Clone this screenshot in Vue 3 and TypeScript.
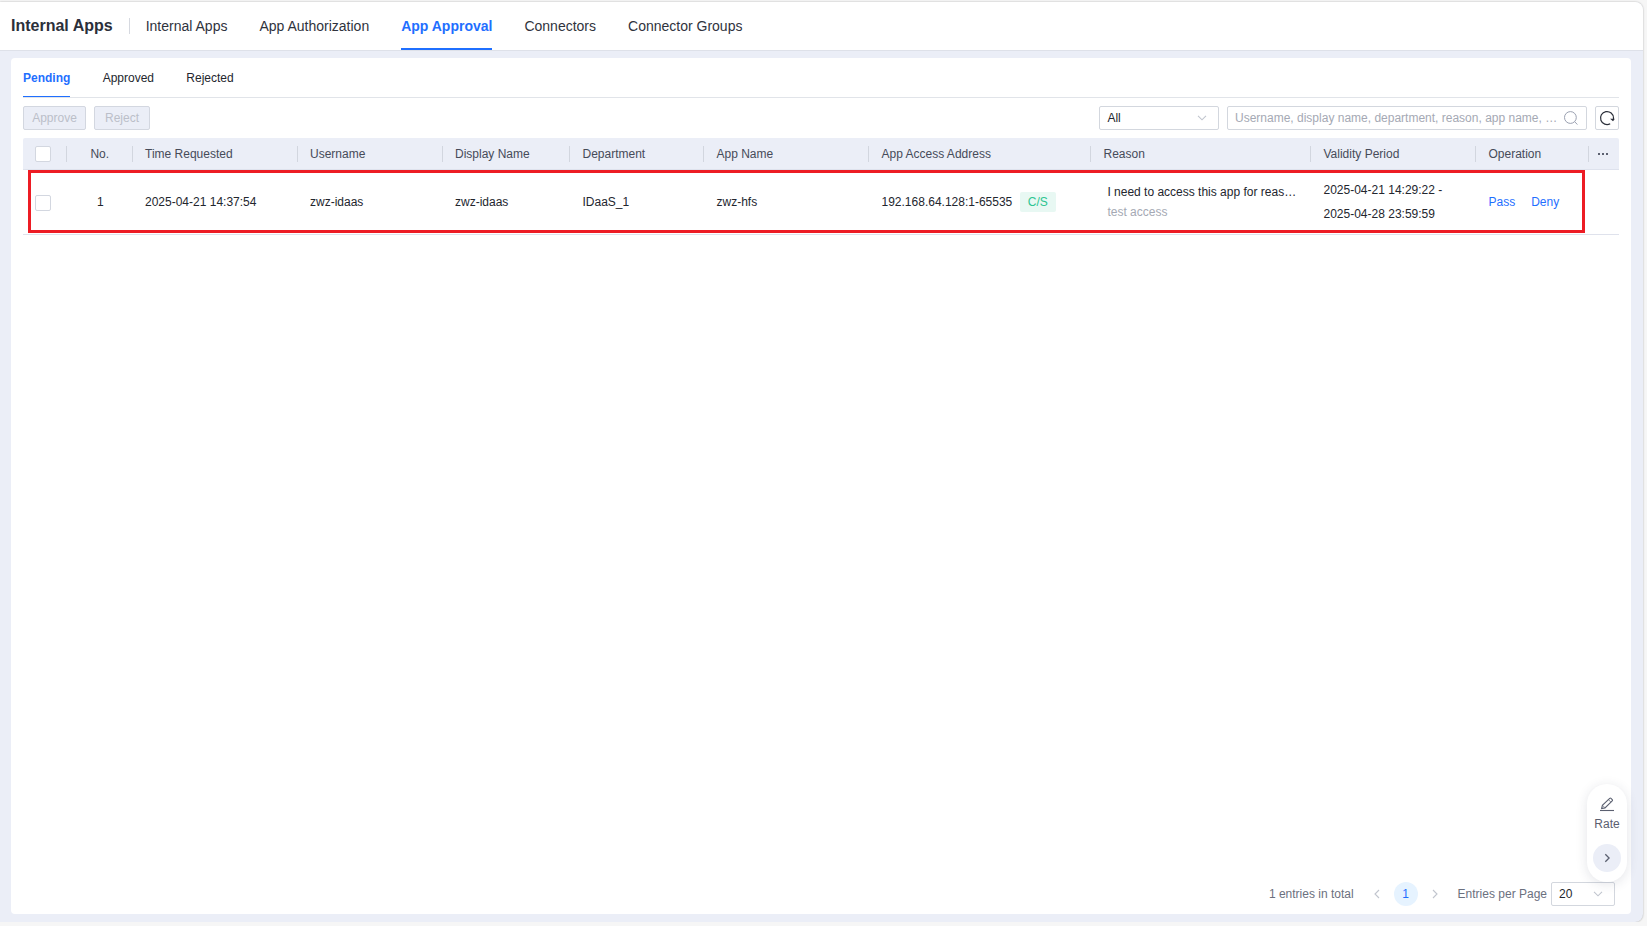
<script setup lang="ts">
import { ref } from 'vue'

interface Column {
  key: string
  label: string
}

const navTabs: string[] = ['Internal Apps', 'App Authorization', 'App Approval', 'Connectors', 'Connector Groups']
const activeNav = ref('App Approval')

const statusTabs: string[] = ['Pending', 'Approved', 'Rejected']
const activeStatus = ref('Pending')

const columns: Column[] = [
  { key: 'no', label: 'No.' },
  { key: 'time', label: 'Time Requested' },
  { key: 'user', label: 'Username' },
  { key: 'display', label: 'Display Name' },
  { key: 'dept', label: 'Department' },
  { key: 'app', label: 'App Name' },
  { key: 'address', label: 'App Access Address' },
  { key: 'reason', label: 'Reason' },
  { key: 'validity', label: 'Validity Period' },
  { key: 'operation', label: 'Operation' },
]

const request = {
  no: 1,
  time: '2025-04-21 14:37:54',
  user: 'zwz-idaas',
  display: 'zwz-idaas',
  dept: 'IDaaS_1',
  app: 'zwz-hfs',
  address: '192.168.64.128:1-65535',
  type: 'C/S',
  reason: 'I need to access this app for reas…',
  note: 'test access',
  from: '2025-04-21 14:29:22 -',
  to: '2025-04-28 23:59:59',
}
</script>

<template>
  <div class="window">
    <header class="topbar">
      <h1 class="title">Internal Apps</h1>
      <span class="divider"></span>
      <nav class="nav">
        <a v-for="tab in navTabs" :key="tab" class="nav-tab" :class="{ active: tab === activeNav }" @click="activeNav = tab">{{ tab }}</a>
      </nav>
    </header>

    <main class="panel">
      <nav class="status-tabs">
        <a v-for="tab in statusTabs" :key="tab" class="status-tab" :class="{ active: tab === activeStatus }" @click="activeStatus = tab">{{ tab }}</a>
      </nav>

      <div class="toolbar">
        <button class="btn approve" disabled>Approve</button>
        <button class="btn reject" disabled>Reject</button>
        <div class="select filter">
          <span>All</span>
          <svg class="chevron" width="10" height="6" viewBox="0 0 10 6"><path d="M1 .8 5 4.8 9 .8" /></svg>
        </div>
        <div class="search">
          <span class="placeholder">Username, display name, department, reason, app name, …</span>
          <svg width="14" height="14" viewBox="0 0 14 14" fill="none" stroke="#9aa0b0"><circle cx="6.4" cy="6.5" r="5.9" /><path d="m10.7 10.8 2.8 2.8" /></svg>
        </div>
        <button class="refresh" aria-label="Refresh">
          <svg width="16" height="16" viewBox="0 0 16 16"><path d="M11.2 13.7A6.5 6.5 0 1 1 14.5 8v1.2" fill="none" stroke="#2b2f3a" stroke-width="1.2" /><path d="M11.1 8.7h4.2v1.1l-1.3 1.5z" fill="#2b2f3a" /></svg>
        </button>
      </div>

      <section class="table">
        <div class="row head">
          <div class="cell check"><span class="box"></span></div>
          <div v-for="col in columns" :key="col.key" class="cell" :class="col.key">{{ col.label }}</div>
          <div class="cell more">
            <svg width="12" height="4" viewBox="0 0 12 4" fill="#5b6070"><rect x="1" y="1" width="2" height="2" /><rect x="5" y="1" width="2" height="2" /><rect x="9" y="1" width="2" height="2" /></svg>
          </div>
        </div>
        <div class="row body">
          <div class="cell check"><span class="box"></span></div>
          <div class="cell no">{{ request.no }}</div>
          <div class="cell">{{ request.time }}</div>
          <div class="cell">{{ request.user }}</div>
          <div class="cell">{{ request.display }}</div>
          <div class="cell">{{ request.dept }}</div>
          <div class="cell">{{ request.app }}</div>
          <div class="cell">{{ request.address }}<span class="tag">{{ request.type }}</span></div>
          <div class="cell reason-cell"><span>{{ request.reason }}</span><span class="note">{{ request.note }}</span></div>
          <div class="cell validity-cell"><span>{{ request.from }}</span><span>{{ request.to }}</span></div>
          <div class="cell actions"><a>Pass</a><a>Deny</a></div>
          <div class="cell"></div>
          <div class="highlight"></div>
        </div>
      </section>

      <footer class="pager">
        <span class="total">1 entries in total</span>
        <svg class="arrow" width="6" height="10" viewBox="0 0 6 10"><path d="M5 1 1 5l4 4" /></svg>
        <span class="page">1</span>
        <svg class="arrow" width="6" height="10" viewBox="0 0 6 10"><path d="m1 1 4 4-4 4" /></svg>
        <span class="per-page">Entries per Page</span>
        <div class="select size">
          <span>20</span>
          <svg class="chevron" width="10" height="6" viewBox="0 0 10 6"><path d="M1 .8 5 4.8 9 .8" /></svg>
        </div>
      </footer>
    </main>

    <aside class="rate">
      <svg width="16" height="16" viewBox="0 0 16 16" fill="none" stroke="#5b6070" stroke-width="1.1"><path d="M1 13.5h14" /><path d="m2.6 11.6.8-3.2 7.3-7.1q.7-.6 1.3 0l1.2 1.2q.6.7 0 1.3l-7.2 7.1z" /><path d="m3.6 8.4 2.5 2.5M9.4 2.6l2.5 2.5" stroke-width=".7" /></svg>
      <span class="rate-label">Rate</span>
      <button class="rate-toggle" aria-label="Collapse">
        <svg width="6" height="10" viewBox="0 0 6 10" fill="none" stroke="#5b6070" stroke-width="1.3"><path d="m1.3 1.2 3.8 3.8-3.8 3.8" /></svg>
      </button>
    </aside>
  </div>
</template>

<style>
body {
  background: #f6f6f6;
  overflow: hidden;
}
</style>

<style scoped>
.window,
.window * {
  box-sizing: border-box;
}
.window {
  position: relative;
  display: flex;
  flex-direction: column;
  width: 1643px;
  height: 920px;
  margin-top: 2px;
  background: #ebeef7;
  border-radius: 0 8px 8px 0;
  box-shadow: 0 0 2px rgba(0, 0, 0, 0.32);
  font-family: "Liberation Sans", Arial, sans-serif;
  font-size: 12px;
  color: #23262e;
}
.topbar {
  display: flex;
  align-items: center;
  flex: none;
  height: 49px;
  padding-left: 11px;
  background: #fff;
  border-bottom: 1px solid #dee1e9;
  border-radius: 0 8px 0 0;
}
.title {
  width: 118px;
  margin: 0;
  font-size: 16px;
  line-height: 24px;
  font-weight: 700;
  color: #2b2f3a;
}
.divider {
  width: 1px;
  height: 16px;
  background: #d6d9e0;
}
.nav {
  display: flex;
  align-self: stretch;
  gap: 32px;
  margin-left: 15.7px;
}
.nav-tab {
  height: 48px;
  line-height: 48px;
  font-size: 14px;
  color: #2f333d;
}
.nav-tab.active {
  font-weight: 700;
  color: #1f6fff;
  border-bottom: 2px solid #1f6fff;
}
.panel {
  display: flex;
  flex-direction: column;
  flex: 1;
  margin: 7px 12px 8px 11px;
  padding: 0 12px;
  background: #fff;
  border-radius: 4px;
}
.status-tabs {
  display: flex;
  gap: 32.3px;
  height: 40px;
  border-bottom: 1px solid #e1e4e9;
}
.status-tab {
  height: 39px;
  line-height: 40px;
}
.status-tab.active {
  font-weight: 700;
  color: #1f6fff;
  border-bottom: 1px solid #1f6fff;
}
.toolbar {
  display: flex;
  gap: 8px;
  height: 24px;
  margin: 8px 0;
}
.btn {
  height: 24px;
  padding: 0;
  border: 1px solid #d3d7e0;
  border-radius: 2px;
  background: #ebeef7;
  color: #bbbfc9;
  font: 12px/22px "Liberation Sans", Arial, sans-serif;
}
.approve {
  width: 63px;
}
.reject {
  width: 56px;
}
.select,
.search,
.refresh {
  display: flex;
  align-items: center;
  justify-content: space-between;
  height: 24px;
  border: 1px solid #d3d7de;
  border-radius: 2px;
  background: #fff;
}
.filter {
  width: 120px;
  margin-left: auto;
  padding: 0 11px 0 7.4px;
}
.chevron,
.arrow {
  fill: none;
  stroke: #c1c5ce;
  stroke-width: 1.1;
}
.search {
  width: 360px;
  padding: 0 8px 0 7px;
}
.placeholder {
  color: #a5a9b4;
  white-space: nowrap;
}
.refresh {
  justify-content: center;
  width: 24px;
  padding: 0;
}
.row {
  display: grid;
  grid-template-columns: 44px 66px 165px 145px 127px 134px 165px 222px 220px 165px 113px 30px;
  position: relative;
}
.head {
  height: 32px;
  background: #ebeef7;
  border-bottom: 1px solid #dee2ed;
  border-radius: 2px 2px 0 0;
  color: #464b59;
}
.body {
  height: 65px;
  border-bottom: 1px solid #dfe2ec;
}
.cell {
  display: flex;
  align-items: center;
  padding-left: 12px;
  white-space: nowrap;
}
.cell:nth-child(n + 6) {
  padding-left: 12.5px;
}
.head .cell {
  height: 16px;
  margin-top: 8px;
  border-right: 1px solid #d2d6df;
}
.head .cell.more {
  padding-left: 8px;
  border-right: 0;
}
.no {
  justify-content: center;
  padding-left: 0.5px;
}
.body .cell {
  padding-bottom: 1px;
}
.body .check {
  padding-bottom: 0;
  padding-top: 2px;
}
.box {
  width: 16px;
  height: 16px;
  background: #fff;
  border: 1px solid #d3d7e0;
  border-radius: 2px;
}
.tag {
  width: 36px;
  margin-left: 7.5px;
  line-height: 20px;
  border-radius: 2px;
  background: #e8f8f3;
  color: #2dc591;
  text-align: center;
}
.body .cell.reason-cell {
  flex-direction: column;
  align-items: flex-start;
  justify-content: center;
  padding-left: 16.4px;
  line-height: 20px;
}
.note {
  color: #a5a9b4;
}
.validity-cell {
  flex-direction: column;
  align-items: flex-start;
  justify-content: center;
  line-height: 24px;
}
.actions {
  gap: 16px;
  color: #1f6fff;
}
/* Marks the pending request row, lying over the grid lines. */
.highlight {
  position: absolute;
  inset: 0 34px 1px 5px;
  border: 3px solid #ed1c24;
  pointer-events: none;
}
.pager {
  display: flex;
  align-items: center;
  justify-content: flex-end;
  height: 24px;
  margin: auto 4px 8px 0;
  color: #6b707e;
}
.total {
  margin-right: 20px;
}
.page {
  width: 24px;
  margin: 0 14px;
  border-radius: 50%;
  background: #e6f3ff;
  color: #1f6fff;
  line-height: 24px;
  text-align: center;
}
.per-page {
  margin: 0 4px 0 20px;
}
.size {
  width: 64px;
  padding: 0 11px 0 7px;
  color: #23262e;
}
.rate {
  position: absolute;
  right: 16px;
  bottom: 40px;
  display: flex;
  flex-direction: column;
  align-items: center;
  width: 40px;
  height: 98px;
  padding-top: 13px;
  border-radius: 20px;
  background: #fff;
  box-shadow: 0 2px 12px rgba(40, 50, 80, 0.13);
  color: #5b6070;
}
.rate-label {
  margin-top: 3px;
  line-height: 16px;
}
.rate-toggle {
  display: flex;
  align-items: center;
  justify-content: center;
  width: 28px;
  height: 28px;
  margin-top: 12px;
  padding: 0;
  border: 0;
  border-radius: 50%;
  background: #ebeef7;
}
</style>
